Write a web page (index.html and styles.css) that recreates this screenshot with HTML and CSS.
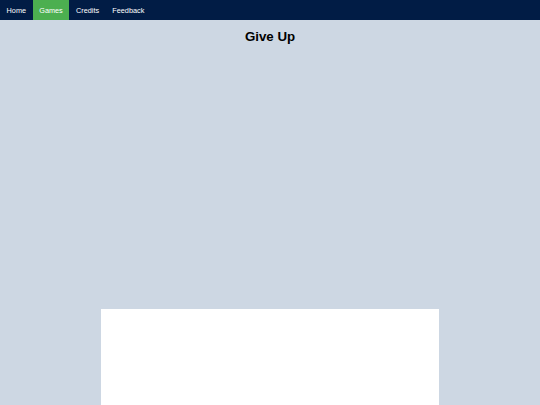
FILE: index.html
```html
<!DOCTYPE html>
<html>
<head>
<meta charset="utf-8">
<link rel="stylesheet" href="styles.css">
</head>
<body>
<nav class="topnav">
  <a class="nav-item" href="#">Home</a>
  <a class="nav-item active" href="#">Games</a>
  <a class="nav-item" href="#">Credits</a>
  <a class="nav-item" href="#">Feedback</a>
</nav>
<main class="content">
  <h1 class="title">Give Up</h1>
  <div class="game-area"></div>
</main>
</body>
</html>
```
FILE: styles.css
```css
html, body {
  margin: 0;
  padding: 0;
  height: 100%;
}
body {
  background: #cdd7e3;
  font-family: "Liberation Sans", Arial, sans-serif;
  overflow: hidden;
}
.topnav {
  display: flex;
  height: 20px;
  background: #011c45;
}
.nav-item {
  display: flex;
  align-items: center;
  padding: 0 6.6px;
  color: #ffffff;
  text-decoration: none;
  font-size: 7.3px;
}
.nav-item.active {
  background: #4caf50;
}
.content {
  display: flex;
  flex-direction: column;
  align-items: center;
}
.title {
  margin: 8px 0 0;
  font-size: 13.3px;
  font-weight: bold;
  color: #000;
  line-height: 17px;
}
.game-area {
  margin-top: 264px;
  width: 338px;
  height: 120px;
  background: #ffffff;
}
```
